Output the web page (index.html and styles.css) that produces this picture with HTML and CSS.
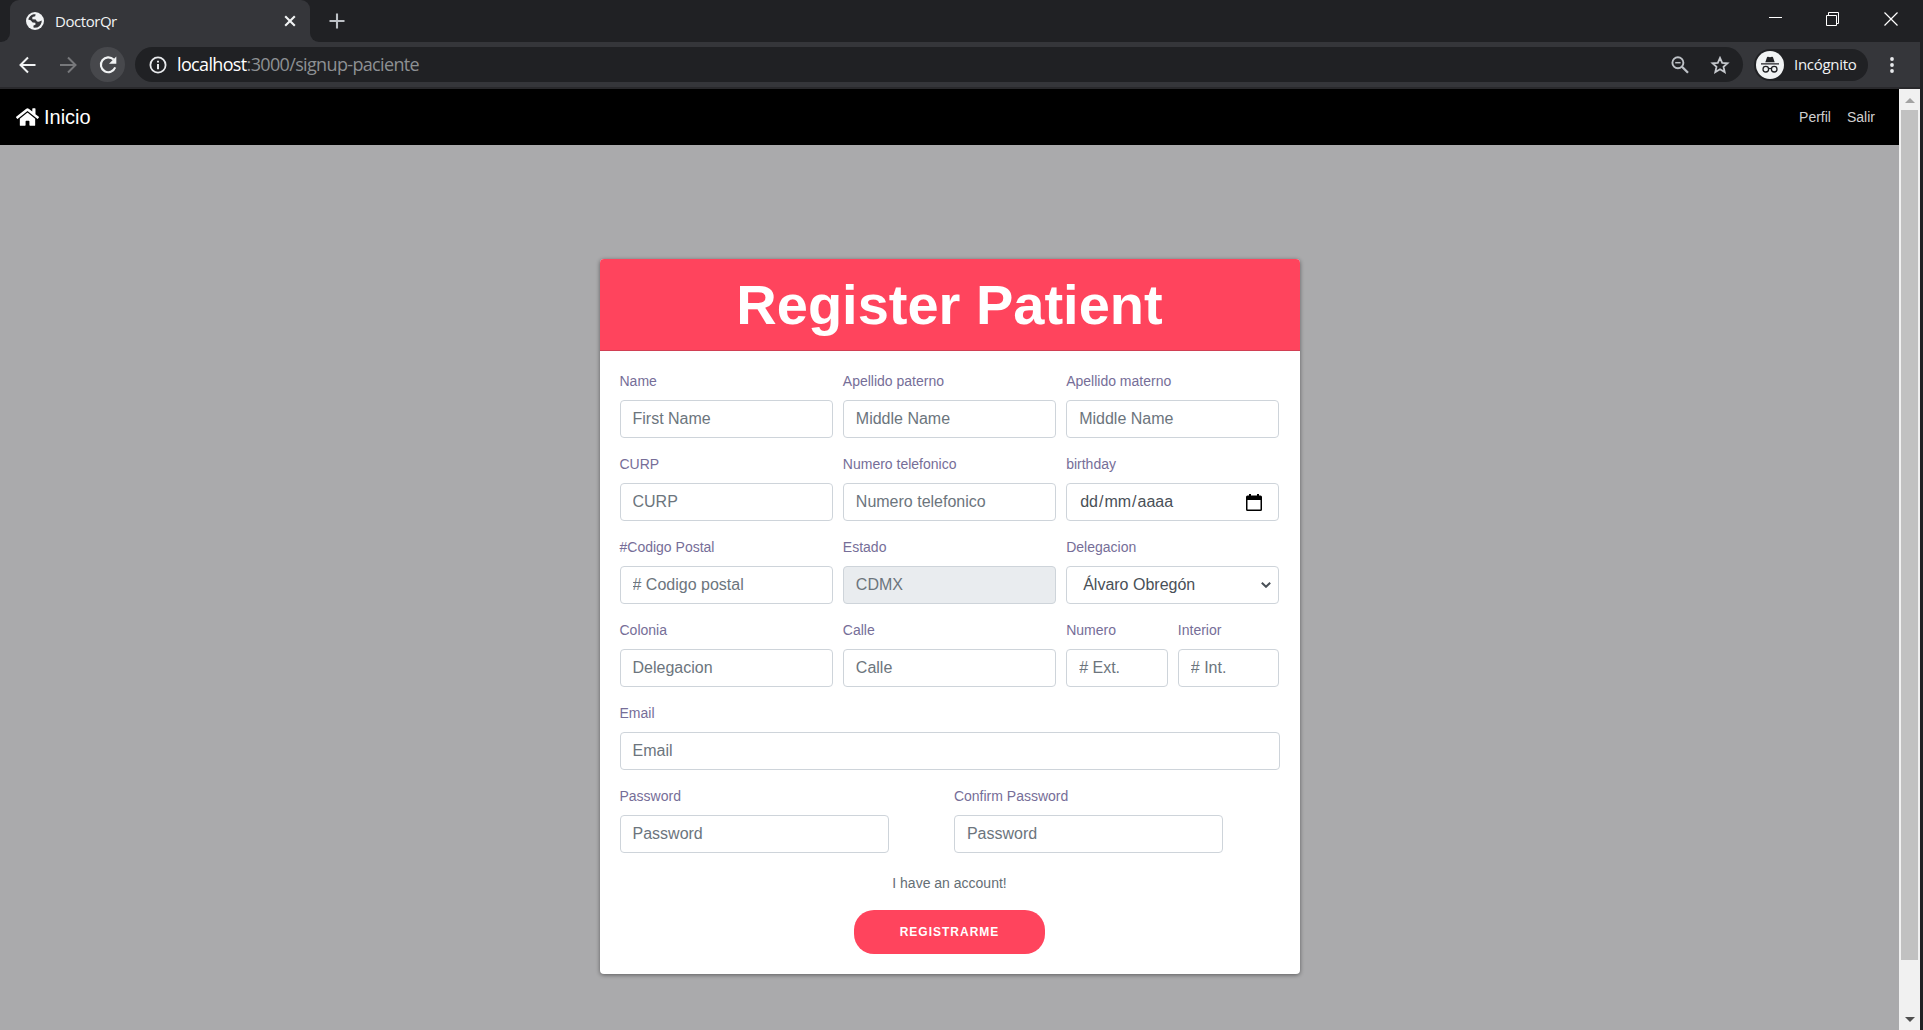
FILE: index.html
```html
<!DOCTYPE html>
<html lang="es">
<head>
<meta charset="utf-8">
<title>DoctorQr</title>
<link rel="stylesheet" href="styles.css">
</head>
<body>
<div class="browser">
  <header class="chrome">
    <div class="tabstrip">
      <div class="tab-prev"></div>
      <div class="tab">
        <svg class="tab-icon" width="18" height="18" viewBox="0 0 18 18"><circle cx="9" cy="9" r="9" fill="#f1f3f4"/><path d="M2.200 7.600C3 5 4.800 3 7.500 2.300L9.600 2.200 9.200 4.200 6.400 5 6.300 7.200 9.700 7.500 11 9.400 12.800 9.700 15.800 8.600C15.800 11.500 14.300 14.200 11.300 15.400L7.700 15.800 7.300 13.800 9.600 12.500 9.300 10.800 6.600 10.600 4.600 8.200Z" fill="#35363a"/></svg>
        <span class="tab-title">DoctorQr</span>
        <svg width="12" height="12" viewBox="0 0 12 12"><path d="M1.200 1.200 10.800 10.800M10.800 1.200 1.200 10.800" stroke="#f1f3f4" stroke-width="2.100"/></svg>
      </div>
      <div class="tab-next"></div>
      <svg class="new-tab" width="16" height="16" viewBox="0 0 16 16"><path d="M8 .5V15.500M.5 8H15.500" stroke="#bdc1c6" stroke-width="2.100"/></svg>
      <div class="window-buttons">
        <svg width="13" height="14" viewBox="0 0 13 14"><path d="M0 5.500H13" stroke="#fff"/></svg>
        <svg width="14" height="14" viewBox="0 0 14 14"><path d="M.5 3.500H10.500V13.500H.5ZM2.500 3.500V.5H12.500V11.500H10.500" fill="none" stroke="#fff"/></svg>
        <svg width="14" height="14" viewBox="0 0 14 14"><path d="M.5 .5 13.500 13.500M13.500 .5 .5 13.500" stroke="#fff" stroke-width="1.200"/></svg>
      </div>
    </div>
    <div class="toolbar">
      <svg class="back" width="18" height="18" viewBox="0 0 18 18"><path d="M16.500 9H2M9 1.500 1.500 9 9 16.500" fill="none" stroke="#f1f3f4" stroke-width="2"/></svg>
      <svg class="forward" width="18" height="18" viewBox="0 0 18 18"><path d="M1 9H16M9 1.500 16.500 9 9 16.500" fill="none" stroke="#77787b" stroke-width="2"/></svg>
      <div class="reload">
        <svg width="20" height="20" viewBox="0 0 20 20"><path d="M15.600 4.600A7.400 7.400 0 1 0 17.200 12.400" fill="none" stroke="#f1f3f4" stroke-width="2.100"/><path d="M18.300 1.500V8.800H11Z" fill="#f1f3f4"/></svg>
      </div>
      <div class="address">
        <svg width="18" height="18" viewBox="0 0 18 18"><circle cx="9" cy="9" r="7.600" fill="none" stroke="#e8eaed" stroke-width="1.800"/><path d="M9 8V13.200M9 4.700V6.600" stroke="#e8eaed" stroke-width="2"/></svg>
        <span class="url"><b>localhost</b>:3000/signup-paciente</span>
        <svg class="zoom" width="18" height="18" viewBox="0 0 18 18"><circle cx="6.900" cy="6.700" r="5.500" fill="none" stroke="#bdc1c6" stroke-width="1.900"/><path d="M11 10.800 17 16.800" stroke="#bdc1c6" stroke-width="2.300"/><path d="M4.200 6.700H9.600" stroke="#bdc1c6" stroke-width="1.500"/></svg>
        <svg width="20" height="18" viewBox="0 0 20 18"><path d="M10 1.900 12.200 6.800 17.500 7.300 13.500 10.800 14.700 16.100 10 13.300 5.300 16.100 6.500 10.800 2.500 7.300 7.800 6.800Z" fill="none" stroke="#c4c7cc" stroke-width="1.800"/></svg>
      </div>
      <div class="incognito">
        <svg width="28" height="28" viewBox="0 0 28 28"><circle cx="14" cy="14" r="14" fill="#f1f3f4"/><path d="M9.300 11.200 11 6.200Q11.300 5.500 12 5.700L14 6.300 16 5.700Q16.700 5.500 17 6.200L18.700 11.200ZM5 12.200H23V13.400H5Z" fill="#202124"/><g fill="none" stroke="#202124" stroke-width="1.300"><circle cx="9.800" cy="18.200" r="2.800"/><circle cx="18.200" cy="18.200" r="2.800"/><path d="M12.500 17.800Q14 16.900 15.500 17.800"/></g></svg>
        <span>Incógnito</span>
      </div>
      <svg class="menu" width="4" height="16" viewBox="0 0 4 16" fill="#e8eaed"><circle cx="2" cy="2" r="1.900"/><circle cx="2" cy="8" r="1.900"/><circle cx="2" cy="14" r="1.900"/></svg>
    </div>
  </header>
  <div class="viewport">
    <div class="page">
      <nav class="navbar">
        <a class="brand">
          <svg width="23" height="20" viewBox="0 0 576 512" preserveAspectRatio="none"><path fill="#fff" d="M280.4 148.3 96 300.1V464a16 16 0 0 0 16 16l112-.3a16 16 0 0 0 16-16V368a16 16 0 0 1 16-16h64a16 16 0 0 1 16 16v95.600a16 16 0 0 0 16 16.100L464 480a16 16 0 0 0 16-16V300L295.700 148.300a12.200 12.200 0 0 0-15.300 0zM571.600 251.500 488 182.600V44.100a12 12 0 0 0-12-12h-56a12 12 0 0 0-12 12v72.600L318.500 43a48 48 0 0 0-61 0L4.300 251.500a12 12 0 0 0-1.600 16.900l25.500 31a12 12 0 0 0 16.900 1.600L280.400 107.200a12.200 12.200 0 0 1 15.300 0l235.200 193.700a12 12 0 0 0 16.900-1.600l25.500-31a12 12 0 0 0-1.700-16.800z"/></svg>
          <span>Inicio</span>
        </a>
        <div class="nav-links"><a>Perfil</a><a>Salir</a></div>
      </nav>
      <main class="card">
        <h1 class="card-title">Register Patient</h1>
        <form class="form">
          <div class="row thirds">
            <label class="field"><span>Name</span><input placeholder="First Name"></label>
            <label class="field"><span>Apellido paterno</span><input placeholder="Middle Name"></label>
            <label class="field"><span>Apellido materno</span><input placeholder="Middle Name"></label>
          </div>
          <div class="row thirds">
            <label class="field"><span>CURP</span><input placeholder="CURP"></label>
            <label class="field"><span>Numero telefonico</span><input placeholder="Numero telefonico"></label>
            <div class="field"><span>birthday</span>
              <div class="control date"><span class="date-text">dd<i>/</i>mm<i>/</i>aaaa</span>
                <svg width="16" height="17" viewBox="0 0 16 17"><path d="M3 0H5V1.500H11V0H13V1.500H14.500Q16 1.500 16 3V15.500Q16 17 14.500 17H1.500Q0 17 0 15.500V3Q0 1.500 1.500 1.500H3ZM1.500 6V15.500H14.500V6Z" fill="#000" fill-rule="evenodd"/></svg>
              </div>
            </div>
          </div>
          <div class="row thirds">
            <label class="field"><span>#Codigo Postal</span><input placeholder="# Codigo postal"></label>
            <label class="field"><span>Estado</span><input placeholder="CDMX" disabled></label>
            <div class="field"><span>Delegacion</span>
              <div class="control select"><span>Álvaro Obregón</span>
                <svg width="10" height="6" viewBox="0 0 10 6"><path d="M.8 .8 5 4.800 9.200 .8" fill="none" stroke="#495057" stroke-width="2"/></svg>
              </div>
            </div>
          </div>
          <div class="row address-row">
            <label class="field"><span>Colonia</span><input placeholder="Delegacion"></label>
            <label class="field"><span>Calle</span><input placeholder="Calle"></label>
            <label class="field"><span>Numero</span><input placeholder="# Ext."></label>
            <label class="field"><span>Interior</span><input placeholder="# Int."></label>
          </div>
          <div class="row">
            <label class="field"><span>Email</span><input placeholder="Email"></label>
          </div>
          <div class="row passwords">
            <label class="field"><span>Password</span><input type="password" placeholder="Password"></label>
            <label class="field"><span>Confirm Password</span><input type="password" placeholder="Password"></label>
          </div>
          <a class="account">I have an account!</a>
          <button class="submit" type="button">Registrarme</button>
        </form>
      </main>
    </div>
    <div class="scrollbar">
      <svg width="10" height="5" viewBox="0 0 10 5"><path d="M5 0 10 5H0Z" fill="#a3a3a3"/></svg>
      <div class="thumb"></div>
      <svg width="10" height="5" viewBox="0 0 10 5"><path d="M0 0H10L5 5Z" fill="#505050"/></svg>
    </div>
  </div>
</div>
</body>
</html>
```
FILE: styles.css
```css
* { box-sizing: border-box; }
body { margin: 0; overflow: hidden; font-family: "Liberation Sans", Arial, sans-serif; font-size: 14px; line-height: 1.5; }
svg { display: block; flex: none; }
.browser { height: 1030px; display: flex; flex-direction: column; background: #202124; }

.chrome { height: 89px; flex: none; font-family: "Open Sans", "Noto Sans", sans-serif; color: #f1f3f4; }
.tabstrip { height: 42px; display: flex; background: #202124; }
.tab-prev, .tab-next { width: 10px; background: #35363a; }
.tab-prev::before, .tab-next::before { content: ""; display: block; height: 42px; background: #202124; }
.tab-prev::before { border-bottom-right-radius: 9px; }
.tab-next::before { border-bottom-left-radius: 9px; }
.tab { width: 300px; padding: 0 14px 0 16px; display: flex; align-items: center; background: #35363a; border-radius: 9px 9px 0 0; }
.tab-title { margin-left: 11px; flex: 1; font-size: 15px; letter-spacing: -.45px; }
.new-tab { margin: 13px 0 0 9px; }
.window-buttons { margin: 12px 25px 0 auto; display: flex; gap: 44px; }

.toolbar { width: 1920px; height: 47px; padding: 5px 0 5px 19px; display: flex; align-items: center; background: #35363a; border-bottom: 2px solid #29292c; }
.forward { margin-left: 22px; }
.reload { width: 35px; height: 35px; margin-left: 13px; display: grid; place-items: center; border-radius: 50%; background: #47484c; }
.address { width: 1608px; height: 35px; margin-left: 10px; padding: 0 13px 0 14px; display: flex; align-items: center; border-radius: 18px; background: #202124; }
.url { margin-left: 10px; flex: 1; font-size: 18px; letter-spacing: -.65px; color: #8d9093; }
.url b { font-weight: 400; color: #fff; }
.zoom { margin-right: 21px; }
.incognito { width: 114px; height: 32px; margin-left: 11px; padding-left: 2px; display: flex; align-items: center; gap: 10px; border-radius: 16px; background: #202124; font-size: 15px; letter-spacing: -.3px; }
.menu { margin-left: 22px; }

.viewport { flex: 1; display: flex; padding-right: 3px; }
.page { flex: 1; background: #aaaaac; }
.navbar { height: 56px; padding: 0 24px 0 16px; display: flex; align-items: center; justify-content: space-between; background: #000; }
.brand { display: flex; align-items: center; gap: 5px; font-size: 20px; color: #fff; }
.nav-links { display: flex; gap: 16px; color: #d0d0d0; }

.card { width: 700px; margin: 114px auto 0; border-radius: 4px; background: #fff; box-shadow: 0 1px 4px rgba(0, 0, 0, .45); overflow: hidden; }
.card-title { height: 92px; margin: 0; padding: 12px 20px; background: #ff445d; border-bottom: 1px solid #d13f53; color: #fff; font-size: 56px; line-height: 67px; text-align: center; }
.form { height: 623px; padding: 20px; display: flex; flex-direction: column; }
.row { display: grid; column-gap: 10px; margin-bottom: 16px; }
.thirds { grid-template-columns: repeat(3, 1fr); }
.address-row { grid-template-columns: 213.33px 213.33px 101.67px 101.3px; }
.passwords { grid-template-columns: 269px 269.5px; column-gap: 65.4px; }
.field { min-width: 0; display: flex; flex-direction: column; gap: 8px; color: #766e98; }
input, .control { width: 100%; height: 38px; padding: 6px 12px; border: 1px solid #ced4da; border-radius: 4px; background: #fff; font: 16px/24px "Liberation Sans", Arial, sans-serif; color: #495057; }
input::placeholder { color: #6c757d; opacity: 1; }
input:disabled { background: #e9ecef; }
.control { display: flex; align-items: center; }
.date { justify-content: space-between; padding: 6px 16px 6px 13px; }
.date i { font-style: normal; padding: 0 1px; }
.select { justify-content: space-between; padding: 6px 7px 6px 16px; }
.account { align-self: center; margin-top: 4px; color: #656e75; }
.submit { align-self: center; width: 191px; height: 44px; margin-top: 16px; padding: 0; border: 0; border-radius: 20px; background: #ff445d; color: #fff; font: bold 12px/18px "Liberation Sans", Arial, sans-serif; letter-spacing: 1px; text-transform: uppercase; }

.scrollbar { width: 21px; padding: 9px 2px 8px; display: flex; flex-direction: column; align-items: center; background: #f1f1f1; }
.thumb { width: 17px; height: 850px; margin: 7px 0 auto; background: #c1c1c1; }
```
